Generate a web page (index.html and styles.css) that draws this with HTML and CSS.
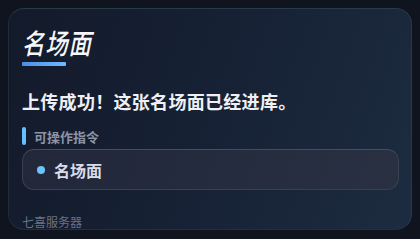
FILE: index.html
```html
<!DOCTYPE html>
<html>
<head lang="zh">
    <meta charset="UTF-8">
    <title>名场面</title>
    <link rel="stylesheet" href="styles.css">
</head>
<body>
<div class="card">
    <div class="title">名场面</div>
    <div class="title-line"></div>
    <div class="message">上传成功！这张名场面已经进库。</div>
    <div class="label">可操作指令</div>
    <div class="command">
        <span class="dot"></span>
        <span class="command-text">名场面</span>
    </div>
    <div class="footer">七喜服务器</div>
</div>
</body>
</html>
```

FILE: styles.css
```css
html, body {
    margin: 0;
    width: 420px;
    height: 239px;
    background: #10141f;
    font-family: "Noto Sans CJK SC", "Noto Sans", sans-serif;
    overflow: hidden;
}

.card {
    box-sizing: border-box;
    width: 404px;
    height: 222px;
    margin: 8px 0 0 8px;
    padding: 17px 12px 0 13px;
    border: 1px solid #263a4a;
    border-left-color: #1f2c3c;
    border-bottom-color: #1f3040;
    border-radius: 16px;
    background: linear-gradient(110deg, #131a2a 0%, #172236 55%, #1d2c40 100%);
}

.title {
    font-size: 28px;
    line-height: 32px;
    font-weight: 500;
    font-style: italic;
    letter-spacing: 1px;
    color: #f6f7fa;
    transform: scaleX(0.8);
    transform-origin: left center;
}

.title-line {
    width: 44px;
    height: 4px;
    margin-top: 4px;
    border-radius: 1px;
    background: linear-gradient(90deg, #4c8fe6, #6cbcff);
}

.message {
    margin-top: 23px;
    font-size: 18px;
    line-height: 24px;
    font-weight: 700;
    letter-spacing: 0.3px;
    color: #eef0f5;
}

.label {
    display: flex;
    align-items: center;
    margin-top: 14px;
    height: 18px;
    font-size: 13px;
    font-weight: 700;
    color: #8d94a6;
}

.label::before {
    content: "";
    width: 4px;
    height: 18px;
    margin-right: 8px;
    border-radius: 2px;
    background: #64c0ff;
}

.command {
    box-sizing: border-box;
    display: flex;
    align-items: center;
    height: 41px;
    margin-top: 4px;
    padding-left: 14px;
    border: 1px solid #3a4052;
    border-top-color: #474d60;
    border-radius: 12px;
    background: linear-gradient(110deg, #22273a, #283042);
}

.dot {
    width: 8px;
    height: 8px;
    border-radius: 50%;
    background: #6cc4ff;
    margin-right: 9px;
}

.command-text {
    font-size: 16px;
    font-weight: 700;
    color: #d9dce6;
}

.footer {
    margin-top: 24px;
    font-size: 12px;
    line-height: 16px;
    color: #6a7284;
}
```
